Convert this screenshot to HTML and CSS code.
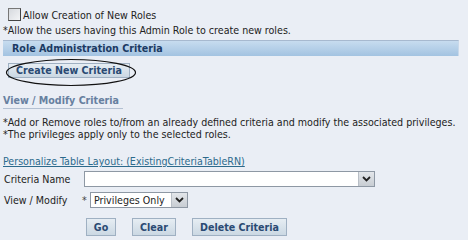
FILE: index.html
```html
<!DOCTYPE html>
<html lang="en">
<head>
    <meta charset="UTF-8">
    <title>Role Administration</title>
    <link rel="stylesheet" href="styles.css">
</head>
<body>
    <div class="page">
        <div class="check-row">
            <span class="checkbox"></span>
            <span>Allow Creation of New Roles</span>
        </div>
        <div class="hint">*Allow the users having this Admin Role to create new roles.</div>

        <div class="section-bar">Role Administration Criteria</div>

        <div class="create-wrap">
            <span class="btn btn-create">Create New Criteria</span>
            <svg class="circle-mark" width="132" height="29" viewBox="0 0 132 29">
                <ellipse cx="66" cy="14.5" rx="64.5" ry="13" fill="none" stroke="#111" stroke-width="1.2"/>
            </svg>
        </div>

        <div class="sub-heading">View / Modify Criteria</div>

        <div class="notes">
            <p>*Add or Remove roles to/from an already defined criteria and modify the associated privileges.</p>
            <p>*The privileges apply only to the selected roles.</p>
        </div>

        <a class="personalize" href="#">Personalize Table Layout: (ExistingCriteriaTableRN)</a>

        <div class="form-row">
            <span class="label">Criteria Name</span>
            <div class="select select-wide">
                <span class="select-text"></span>
                <span class="select-arrow">
                    <svg width="9" height="6" viewBox="0 0 9 6"><path d="M1 1 L4.5 4.5 L8 1" fill="none" stroke="#222" stroke-width="1.8"/></svg>
                </span>
            </div>
        </div>

        <div class="form-row">
            <span class="label">View / Modify</span>
            <span class="req">*</span>
            <div class="select select-small">
                <span class="select-text">Privileges Only</span>
                <span class="select-arrow">
                    <svg width="9" height="6" viewBox="0 0 9 6"><path d="M1 1 L4.5 4.5 L8 1" fill="none" stroke="#222" stroke-width="1.8"/></svg>
                </span>
            </div>
        </div>

        <div class="actions">
            <span class="btn btn-go">Go</span>
            <span class="btn btn-clear">Clear</span>
            <span class="btn btn-delete">Delete Criteria</span>
        </div>
    </div>
</body>
</html>
```

FILE: styles.css
```css
body {
    margin: 0;
    padding: 0;
    background-color: #eaeef5;
    font-family: "DejaVu Sans Condensed", "DejaVu Sans", sans-serif;
    font-size: 10.6px;
    color: #222;
}
.page {
    padding: 8px 0 0 3px;
    white-space: nowrap;
}
.check-row {
    display: flex;
    align-items: center;
    gap: 2px;
    padding-left: 5px;
    height: 13px;
}
.checkbox {
    width: 11px;
    height: 11px;
    border: 1px solid #444;
    border-top-color: #777;
    border-left-color: #777;
    background: linear-gradient(135deg, #d6d9de, #f3f4f6);
}
.hint {
    margin-top: 2px;
    line-height: 14px;
}
.section-bar {
    width: 446px;
    margin-top: 3px;
    height: 15px;
    line-height: 15px;
    padding-left: 9px;
    border-top: 1px solid #a7b9cf;
    border-right: 1px solid #c9d9ea;
    background: linear-gradient(#c7dcef, #a3c3e1);
    color: #1b3a63;
    font-weight: bold;
}
.create-wrap {
    position: relative;
    margin-top: 7px;
    padding-left: 5px;
    height: 16px;
}
.circle-mark {
    position: absolute;
    left: 2px;
    top: -5px;
}
.btn {
    display: inline-block;
    height: 16px;
    line-height: 16px;
    border: 1px solid #9fb0c2;
    background: linear-gradient(#e6edf3, #cbd8e3);
    color: #2a4a73;
    font-weight: bold;
    text-align: center;
    box-sizing: border-box;
}
.btn-create {
    width: 122px;
    height: 15px;
    line-height: 13px;
}
.sub-heading {
    display: inline-block;
    margin-top: 15px;
    padding-right: 4px;
    padding-bottom: 2px;
    border-bottom: 1px solid #b3c0d2;
    color: #6780a0;
    font-weight: bold;
    line-height: 12px;
}
.notes {
    margin-top: 7px;
}
.notes p {
    margin: 0;
    line-height: 12px;
}
.personalize {
    display: block;
    margin-top: 15px;
    color: #2c6a8c;
    line-height: 12px;
}
.form-row {
    display: flex;
    align-items: center;
    margin-top: 4px;
}
.form-row + .form-row {
    margin-top: 5px;
}
.label {
    width: 78px;
    padding-left: 1px;
}
.req {
    width: 8px;
    color: #444;
}
.select {
    display: flex;
    align-items: center;
    height: 16px;
    box-sizing: border-box;
    border: 1px solid #8e98a4;
    background: #fff;
}
.select-wide {
    width: 291px;
    margin-left: 2px;
}
.select-small {
    width: 98px;
}
.select-text {
    flex: 1;
    padding-left: 3px;
}
.select-arrow {
    width: 15px;
    height: 14px;
    display: flex;
    align-items: center;
    justify-content: center;
    background: linear-gradient(#e3e6ea, #c8cdd3);
    border-left: 1px solid #b8bec6;
}
.actions {
    display: flex;
    gap: 16px;
    margin-top: 10px;
    padding-left: 83px;
}
.btn-go {
    width: 30px;
    height: 18px;
    line-height: 16px;
}
.btn-clear {
    width: 44px;
    height: 18px;
    line-height: 16px;
}
.btn-delete {
    width: 95px;
    height: 18px;
    line-height: 16px;
}
```
